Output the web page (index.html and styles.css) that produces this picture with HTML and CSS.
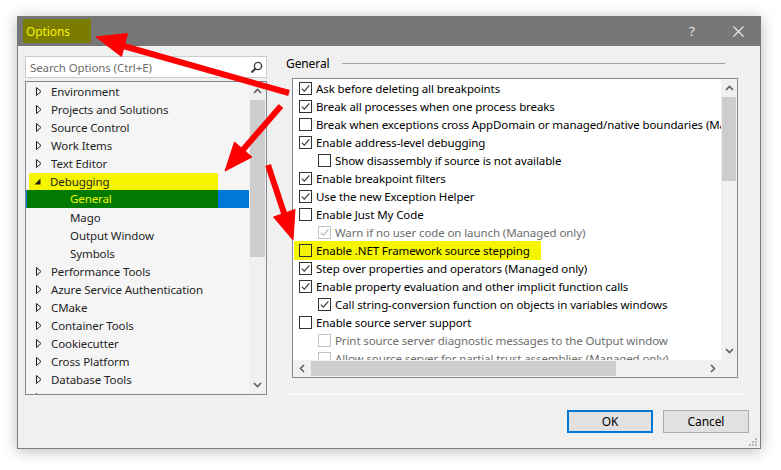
FILE: index.html
```html
<!DOCTYPE html>
<html>
<head>
<meta charset="utf-8">
<title>Options</title>
<link rel="stylesheet" href="styles.css">
</head>
<body>
<div class="stage">
  <div class="window">
    <div class="titlebar">
      <div class="title">Options</div>
      <div class="tb-spacer"></div>
      <div class="tb-btn">?</div>
      <div class="tb-btn"><svg width="11" height="11" viewBox="0 0 11 11"><path d="M0.5 0.5 L10.5 10.5 M10.5 0.5 L0.5 10.5" stroke="#ececec" stroke-width="1.1" fill="none"/></svg></div>
    </div>
    <div class="main">
      <div class="left">
        <div class="search">
          <span class="search-text">Search Options (Ctrl+E)</span>
          <svg class="search-icon" width="13" height="13" viewBox="0 0 13 13"><circle cx="8" cy="5" r="3.6" stroke="#3c3c3c" stroke-width="1.4" fill="none"/><path d="M5.5 7.5 L1.5 11.5" stroke="#3c3c3c" stroke-width="2" fill="none"/></svg>
        </div>
        <div class="tree">
          <div class="tree-items">
            <div class="trow"><span class="exp"><svg width="6" height="9" viewBox="0 0 6 9"><path d="M0.5 0.5 L5 4.5 L0.5 8.5 Z" stroke="#1e1e1e" fill="none"/></svg></span>Environment</div>
            <div class="trow"><span class="exp"><svg width="6" height="9" viewBox="0 0 6 9"><path d="M0.5 0.5 L5 4.5 L0.5 8.5 Z" stroke="#1e1e1e" fill="none"/></svg></span>Projects and Solutions</div>
            <div class="trow"><span class="exp"><svg width="6" height="9" viewBox="0 0 6 9"><path d="M0.5 0.5 L5 4.5 L0.5 8.5 Z" stroke="#1e1e1e" fill="none"/></svg></span>Source Control</div>
            <div class="trow"><span class="exp"><svg width="6" height="9" viewBox="0 0 6 9"><path d="M0.5 0.5 L5 4.5 L0.5 8.5 Z" stroke="#1e1e1e" fill="none"/></svg></span>Work Items</div>
            <div class="trow"><span class="exp"><svg width="6" height="9" viewBox="0 0 6 9"><path d="M0.5 0.5 L5 4.5 L0.5 8.5 Z" stroke="#1e1e1e" fill="none"/></svg></span>Text Editor</div>
            <div class="trow trow-mark">
              <div class="mark-yellow"><span class="exp exp-open"><svg width="7" height="7" viewBox="0 0 7 7"><path d="M6.5 0.5 L6.5 6.5 L0.5 6.5 Z" fill="#1e1e1e"/></svg></span>Debugging</div>
            </div>
            <div class="trow trow-sel"><div class="mark-green">General</div></div>
            <div class="trow child">Mago</div>
            <div class="trow child">Output Window</div>
            <div class="trow child">Symbols</div>
            <div class="trow"><span class="exp"><svg width="6" height="9" viewBox="0 0 6 9"><path d="M0.5 0.5 L5 4.5 L0.5 8.5 Z" stroke="#1e1e1e" fill="none"/></svg></span>Performance Tools</div>
            <div class="trow"><span class="exp"><svg width="6" height="9" viewBox="0 0 6 9"><path d="M0.5 0.5 L5 4.5 L0.5 8.5 Z" stroke="#1e1e1e" fill="none"/></svg></span>Azure Service Authentication</div>
            <div class="trow"><span class="exp"><svg width="6" height="9" viewBox="0 0 6 9"><path d="M0.5 0.5 L5 4.5 L0.5 8.5 Z" stroke="#1e1e1e" fill="none"/></svg></span>CMake</div>
            <div class="trow"><span class="exp"><svg width="6" height="9" viewBox="0 0 6 9"><path d="M0.5 0.5 L5 4.5 L0.5 8.5 Z" stroke="#1e1e1e" fill="none"/></svg></span>Container Tools</div>
            <div class="trow"><span class="exp"><svg width="6" height="9" viewBox="0 0 6 9"><path d="M0.5 0.5 L5 4.5 L0.5 8.5 Z" stroke="#1e1e1e" fill="none"/></svg></span>Cookiecutter</div>
            <div class="trow"><span class="exp"><svg width="6" height="9" viewBox="0 0 6 9"><path d="M0.5 0.5 L5 4.5 L0.5 8.5 Z" stroke="#1e1e1e" fill="none"/></svg></span>Cross Platform</div>
            <div class="trow"><span class="exp"><svg width="6" height="9" viewBox="0 0 6 9"><path d="M0.5 0.5 L5 4.5 L0.5 8.5 Z" stroke="#1e1e1e" fill="none"/></svg></span>Database Tools</div>
            <div class="trow"><span class="exp"><svg width="6" height="9" viewBox="0 0 6 9"><path d="M0.5 0.5 L5 4.5 L0.5 8.5 Z" stroke="#1e1e1e" fill="none"/></svg></span>DSL Tools</div>
          </div>
          <div class="vscroll">
            <div class="sb-btn"><svg width="9" height="6" viewBox="0 0 9 6"><path d="M1 5 L4.5 1.5 L8 5" stroke="#606060" stroke-width="1.6" fill="none"/></svg></div>
            <div class="sb-thumb tree-thumb"></div>
            <div class="sb-fill"></div>
            <div class="sb-btn"><svg width="9" height="6" viewBox="0 0 9 6"><path d="M1 1 L4.5 4.5 L8 1" stroke="#606060" stroke-width="1.6" fill="none"/></svg></div>
          </div>
        </div>
      </div>
      <div class="right">
        <div class="group-label"><span>General</span><div class="rule"></div></div>
        <div class="listbox">
          <div class="list-area">
            <div class="list-items">
              <div class="lrow"><span class="cb"><svg width="11" height="11" viewBox="0 0 11 11"><path d="M1.8 5.6 L4.3 8.1 L9.4 2.3" stroke="#333" stroke-width="1.1" fill="none"/></svg></span>Ask before deleting all breakpoints</div>
              <div class="lrow"><span class="cb"><svg width="11" height="11" viewBox="0 0 11 11"><path d="M1.8 5.6 L4.3 8.1 L9.4 2.3" stroke="#333" stroke-width="1.1" fill="none"/></svg></span>Break all processes when one process breaks</div>
              <div class="lrow"><span class="cb"></span>Break when exceptions cross AppDomain or managed/native boundaries (Managed only)</div>
              <div class="lrow"><span class="cb"><svg width="11" height="11" viewBox="0 0 11 11"><path d="M1.8 5.6 L4.3 8.1 L9.4 2.3" stroke="#333" stroke-width="1.1" fill="none"/></svg></span>Enable address-level debugging</div>
              <div class="lrow sub"><span class="cb"></span>Show disassembly if source is not available</div>
              <div class="lrow"><span class="cb"><svg width="11" height="11" viewBox="0 0 11 11"><path d="M1.8 5.6 L4.3 8.1 L9.4 2.3" stroke="#333" stroke-width="1.1" fill="none"/></svg></span>Enable breakpoint filters</div>
              <div class="lrow"><span class="cb"><svg width="11" height="11" viewBox="0 0 11 11"><path d="M1.8 5.6 L4.3 8.1 L9.4 2.3" stroke="#333" stroke-width="1.1" fill="none"/></svg></span>Use the new Exception Helper</div>
              <div class="lrow"><span class="cb"></span>Enable Just My Code</div>
              <div class="lrow sub dis"><span class="cb"><svg width="11" height="11" viewBox="0 0 11 11"><path d="M1.8 5.6 L4.3 8.1 L9.4 2.3" stroke="#b4b4b4" stroke-width="1.1" fill="none"/></svg></span>Warn if no user code on launch (Managed only)</div>
              <div class="lrow hl"><div class="hl-box"><span class="cb"></span>Enable .NET Framework source stepping</div></div>
              <div class="lrow"><span class="cb"><svg width="11" height="11" viewBox="0 0 11 11"><path d="M1.8 5.6 L4.3 8.1 L9.4 2.3" stroke="#333" stroke-width="1.1" fill="none"/></svg></span>Step over properties and operators (Managed only)</div>
              <div class="lrow"><span class="cb"><svg width="11" height="11" viewBox="0 0 11 11"><path d="M1.8 5.6 L4.3 8.1 L9.4 2.3" stroke="#333" stroke-width="1.1" fill="none"/></svg></span>Enable property evaluation and other implicit function calls</div>
              <div class="lrow sub"><span class="cb"><svg width="11" height="11" viewBox="0 0 11 11"><path d="M1.8 5.6 L4.3 8.1 L9.4 2.3" stroke="#333" stroke-width="1.1" fill="none"/></svg></span>Call string-conversion function on objects in variables windows</div>
              <div class="lrow"><span class="cb"></span>Enable source server support</div>
              <div class="lrow sub dis"><span class="cb"></span>Print source server diagnostic messages to the Output window</div>
              <div class="lrow sub dis"><span class="cb"></span>Allow source server for partial trust assemblies (Managed only)</div>
            </div>
            <div class="vscroll list-vscroll">
              <div class="sb-btn"><svg width="9" height="6" viewBox="0 0 9 6"><path d="M1 5 L4.5 1.5 L8 5" stroke="#606060" stroke-width="1.6" fill="none"/></svg></div>
              <div class="sb-thumb list-thumb"></div>
              <div class="sb-fill"></div>
              <div class="sb-btn"><svg width="9" height="6" viewBox="0 0 9 6"><path d="M1 1 L4.5 4.5 L8 1" stroke="#606060" stroke-width="1.6" fill="none"/></svg></div>
            </div>
          </div>
          <div class="hscroll">
            <div class="hsb-btn"><svg width="6" height="9" viewBox="0 0 6 9"><path d="M5 1 L1.5 4.5 L5 8" stroke="#606060" stroke-width="1.6" fill="none"/></svg></div>
            <div class="hsb-thumb"></div>
            <div class="sb-fill"></div>
            <div class="hsb-btn"><svg width="6" height="9" viewBox="0 0 6 9"><path d="M1 1 L4.5 4.5 L1 8" stroke="#606060" stroke-width="1.6" fill="none"/></svg></div>
            <div class="corner"></div>
          </div>
        </div>
        <div class="sep"></div>
      </div>
    </div>
    <div class="footer">
      <div class="btn btn-default">OK</div>
      <div class="btn">Cancel</div>
    </div>
    <svg class="grip" width="9" height="9" viewBox="0 0 9 9">
      <rect x="6" y="0" width="2" height="2" fill="#b8b8b8"/>
      <rect x="3" y="3" width="2" height="2" fill="#b8b8b8"/>
      <rect x="6" y="3" width="2" height="2" fill="#b8b8b8"/>
      <rect x="0" y="6" width="2" height="2" fill="#b8b8b8"/>
      <rect x="3" y="6" width="2" height="2" fill="#b8b8b8"/>
      <rect x="6" y="6" width="2" height="2" fill="#b8b8b8"/>
    </svg>
  </div>
  <svg class="arrows" width="781" height="470" viewBox="0 0 781 470">
    <g fill="#ff0000" stroke="#ff0000">
      <line x1="289" y1="93" x2="120" y2="45" stroke-width="6"/>
      <polygon points="96,37 127.5,33.5 121.5,56.5" stroke-width="1"/>
      <line x1="281" y1="106" x2="241" y2="152" stroke-width="6"/>
      <polygon points="225,171 234.5,142 252,157" stroke-width="1"/>
      <line x1="268" y1="165" x2="285" y2="216" stroke-width="6"/>
      <polygon points="293,240 273.5,217 295,209.5" stroke-width="1"/>
    </g>
  </svg>
</div>
</body>
</html>
```
FILE: styles.css
```css
* { box-sizing: border-box; }
html, body { margin: 0; padding: 0; background: #ffffff; }
body {
  font-family: "Segoe UI", "Noto Sans", "DejaVu Sans", sans-serif;
  font-size: 11.5px;
  letter-spacing: -0.1px;
  color: #000;
}
.stage {
  position: relative;
  width: 781px;
  height: 470px;
  overflow: hidden;
  padding: 16px 0 0 17px;
}
.window {
  position: relative;
  width: 744px;
  height: 433px;
  border: 1px solid #7d7d7d;
  border-top: none;
  background: #f0f0f0;
  box-shadow: 0 2px 14px rgba(0, 0, 0, 0.28);
  display: flex;
  flex-direction: column;
}
.titlebar {
  flex: none;
  height: 30px;
  margin: 0 -1px;
  background: #777777;
  display: flex;
  align-items: flex-start;
  padding-left: 6px;
}
.title {
  margin-top: 3px;
  height: 24px;
  width: 68px;
  background: #7b7b00;
  color: #f4f400;
  padding-left: 3px;
  line-height: 25px;
  font-size: 12px;
}
.tb-spacer { flex: 1; }
.tb-btn {
  width: 46px;
  height: 30px;
  display: flex;
  align-items: center;
  justify-content: center;
  color: #ececec;
  font-size: 13px;
}
.main {
  flex: none;
  display: flex;
  height: 349px;
  padding: 10px 0 0 7px;
}
.left { width: 242px; display: flex; flex-direction: column; }
.search {
  height: 22px;
  background: #fff;
  border: 1px solid #cccccc;
  display: flex;
  align-items: center;
  padding-left: 4px;
  padding-right: 3px;
}
.search-text { flex: 1; color: #6d6d6d; }
.search-icon { flex: none; }
.tree {
  margin-top: 3px;
  height: 314px;
  border: 1px solid #828790;
  background: #f5f5f5;
  display: flex;
}
.tree-items { flex: 1; overflow: hidden; padding-top: 0; }
.trow {
  height: 18px;
  display: flex;
  align-items: center;
  white-space: nowrap;
  padding-left: 10px;
  color: #1e1e1e;
}
.trow.child { padding-left: 44px; }
.exp { width: 15px; flex: none; display: flex; align-items: center; }
.exp-open { width: 16px; margin-left: -1px; }
.trow-mark { padding-left: 3px; }
.mark-yellow {
  width: 189px;
  height: 17px;
  margin-top: 1px;
  background: #f5f500;
  display: flex;
  align-items: center;
  padding-left: 6px;
}
.trow-sel { padding-left: 1px; background: #0078d7; }
.mark-green {
  width: 191px;
  height: 18px;
  background: #007a00;
  color: #f4f400;
  padding-left: 43px;
  line-height: 18px;
}
.vscroll {
  width: 17px;
  flex: none;
  background: #f0f0f0;
  display: flex;
  flex-direction: column;
}
.sb-btn {
  height: 18px;
  flex: none;
  display: flex;
  align-items: center;
  justify-content: center;
}
.sb-thumb { flex: none; margin: 0 1px; background: #cdcdcd; }
.tree-thumb { height: 157px; }
.sb-fill { flex: 1; }
.right { width: 460px; margin-left: 18px; display: flex; flex-direction: column; }
.group-label {
  height: 16px;
  margin-top: -1px;
  display: flex;
  align-items: center;
  padding-left: 1px;
  font-size: 12px;
}
.rule { flex: 1; height: 1px; background: #a0a0a0; margin: 0 20px 0 12px; }
.listbox {
  margin-top: 7px;
  margin-left: 7px;
  width: 446px;
  height: 300px;
  border: 1px solid #828790;
  background: #ffffff;
  display: flex;
  flex-direction: column;
}
.list-area { flex: 1; min-height: 0; display: flex; }
.list-items { flex: 1; overflow: hidden; }
.lrow {
  height: 18px;
  display: flex;
  align-items: center;
  white-space: nowrap;
  padding-left: 6px;
  color: #000;
}
.lrow.sub { padding-left: 25px; }
.lrow.dis { color: #6d6d6d; }
.cb {
  width: 13px;
  height: 13px;
  flex: none;
  border: 1px solid #333333;
  background: #ffffff;
  margin-right: 4px;
  display: flex;
}
.lrow.dis .cb { border-color: #c4c4c4; }
.lrow.hl { padding-left: 1px; }
.hl-box {
  width: 247px;
  height: 19px;
  margin-top: 1px;
  background: #f5f500;
  display: flex;
  align-items: center;
  padding-left: 5px;
}
.hl-box .cb { background: transparent; }
.list-vscroll { width: 16px; }
.list-thumb { height: 84px; }
.hscroll {
  height: 17px;
  flex: none;
  background: #f0f0f0;
  display: flex;
}
.hsb-btn {
  width: 17px;
  flex: none;
  display: flex;
  align-items: center;
  justify-content: center;
}
.hsb-thumb { width: 305px; margin: 1px 0 1px 1px; background: #cdcdcd; }
.corner { width: 16px; flex: none; background: #f0f0f0; }
.sep { margin-top: 16px; height: 1px; background: #a0a0a0; border-bottom: 1px solid #ffffff; box-sizing: content-box; }
.footer {
  display: flex;
  justify-content: flex-end;
  gap: 10px;
  padding: 15px 11px 0 0;
}
.btn {
  width: 86px;
  height: 23px;
  background: #e1e1e1;
  border: 1px solid #adadad;
  display: flex;
  align-items: center;
  justify-content: center;
  color: #000;
  font-size: 12px;
}
.btn-default { border: 2px solid #0078d7; }
.grip { position: absolute; right: 2px; bottom: 1px; }
.arrows { position: absolute; left: 0; top: 0; pointer-events: none; }
```
